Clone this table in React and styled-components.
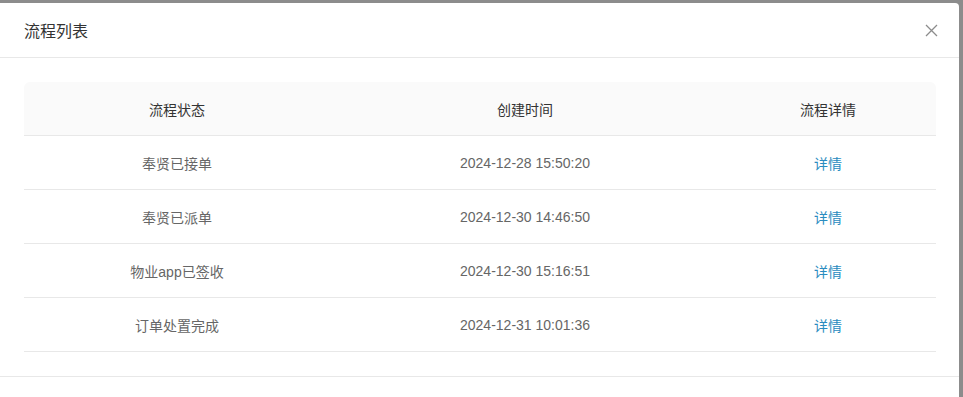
import React from "react";
import styled, { createGlobalStyle } from "styled-components";

const GlobalStyle = createGlobalStyle`
  html, body {
    margin: 0;
    padding: 0;
    background: #8c8c8c;
    font-family: "Liberation Sans", "Noto Sans CJK SC", sans-serif;
    overflow: hidden;
  }
`;

const rows = [
  { status: "奉贤已接单", time: "2024-12-28 15:50:20" },
  { status: "奉贤已派单", time: "2024-12-30 14:46:50" },
  { status: "物业app已签收", time: "2024-12-30 15:16:51" },
  { status: "订单处置完成", time: "2024-12-31 10:01:36" },
];

const App = () => {
  return (
    <Overlay>
      <GlobalStyle />
      <Modal>
        <Header>
          <Title>流程列表</Title>
          <CloseButton aria-label="close">
            <svg width="13" height="13" viewBox="0 0 13 13">
              <path d="M1 1 L12 12 M12 1 L1 12" stroke="#8c8c8c" strokeWidth="1.3" fill="none" />
            </svg>
          </CloseButton>
        </Header>
        <Body>
          <Table>
            <thead>
              <tr>
                <Th>流程状态</Th>
                <Th>创建时间</Th>
                <Th>流程详情</Th>
              </tr>
            </thead>
            <tbody>
              {rows.map(r => (
                <tr key={r.time}>
                  <Td>{r.status}</Td>
                  <Td>{r.time}</Td>
                  <Td>
                    <DetailLink>详情</DetailLink>
                  </Td>
                </tr>
              ))}
            </tbody>
          </Table>
        </Body>
        <Footer />
      </Modal>
    </Overlay>
  );
};

export default App;

const Overlay = styled.div`
  height: 397px;
  padding: 3px 4px 0 0;
  box-sizing: border-box;
  display: flex;
`;

const Modal = styled.div`
  width: 959px;
  background: #fff;
  border-radius: 0 4px 0 0;
  display: flex;
  flex-direction: column;
`;

const Header = styled.div`
  height: 54px;
  display: flex;
  align-items: center;
  justify-content: space-between;
  padding: 0 21px 0 24px;
  border-bottom: 1px solid #e8e8e8;
`;

const Title = styled.div`
  font-size: 16px;
  color: #333;
`;

const CloseButton = styled.span`
  display: flex;
  align-items: center;
  cursor: pointer;
`;

const Body = styled.div`
  padding: 24px 23px 24px 24px;
`;

const Table = styled.table`
  width: 100%;
  border-collapse: separate;
  border-spacing: 0;
  table-layout: fixed;

  th:nth-child(1) { width: 306px; }
  th:nth-child(2) { width: 390px; }
`;

const Th = styled.th`
  height: 53px;
  padding: 0;
  background: #fafafa;
  font-weight: 400;
  font-size: 14px;
  color: #333;
  text-align: center;
  border-bottom: 1px solid #e8e8e8;

  &:first-child { border-top-left-radius: 6px; }
  &:last-child { border-top-right-radius: 6px; }
`;

const Td = styled.td`
  height: 53px;
  padding: 0;
  font-size: 14px;
  color: #666;
  text-align: center;
  border-bottom: 1px solid #e8e8e8;
`;

const DetailLink = styled.a`
  color: #2a8cc0;
  cursor: pointer;
`;

const Footer = styled.div`
  flex: 1;
  border-top: 1px solid #e8e8e8;
`;
